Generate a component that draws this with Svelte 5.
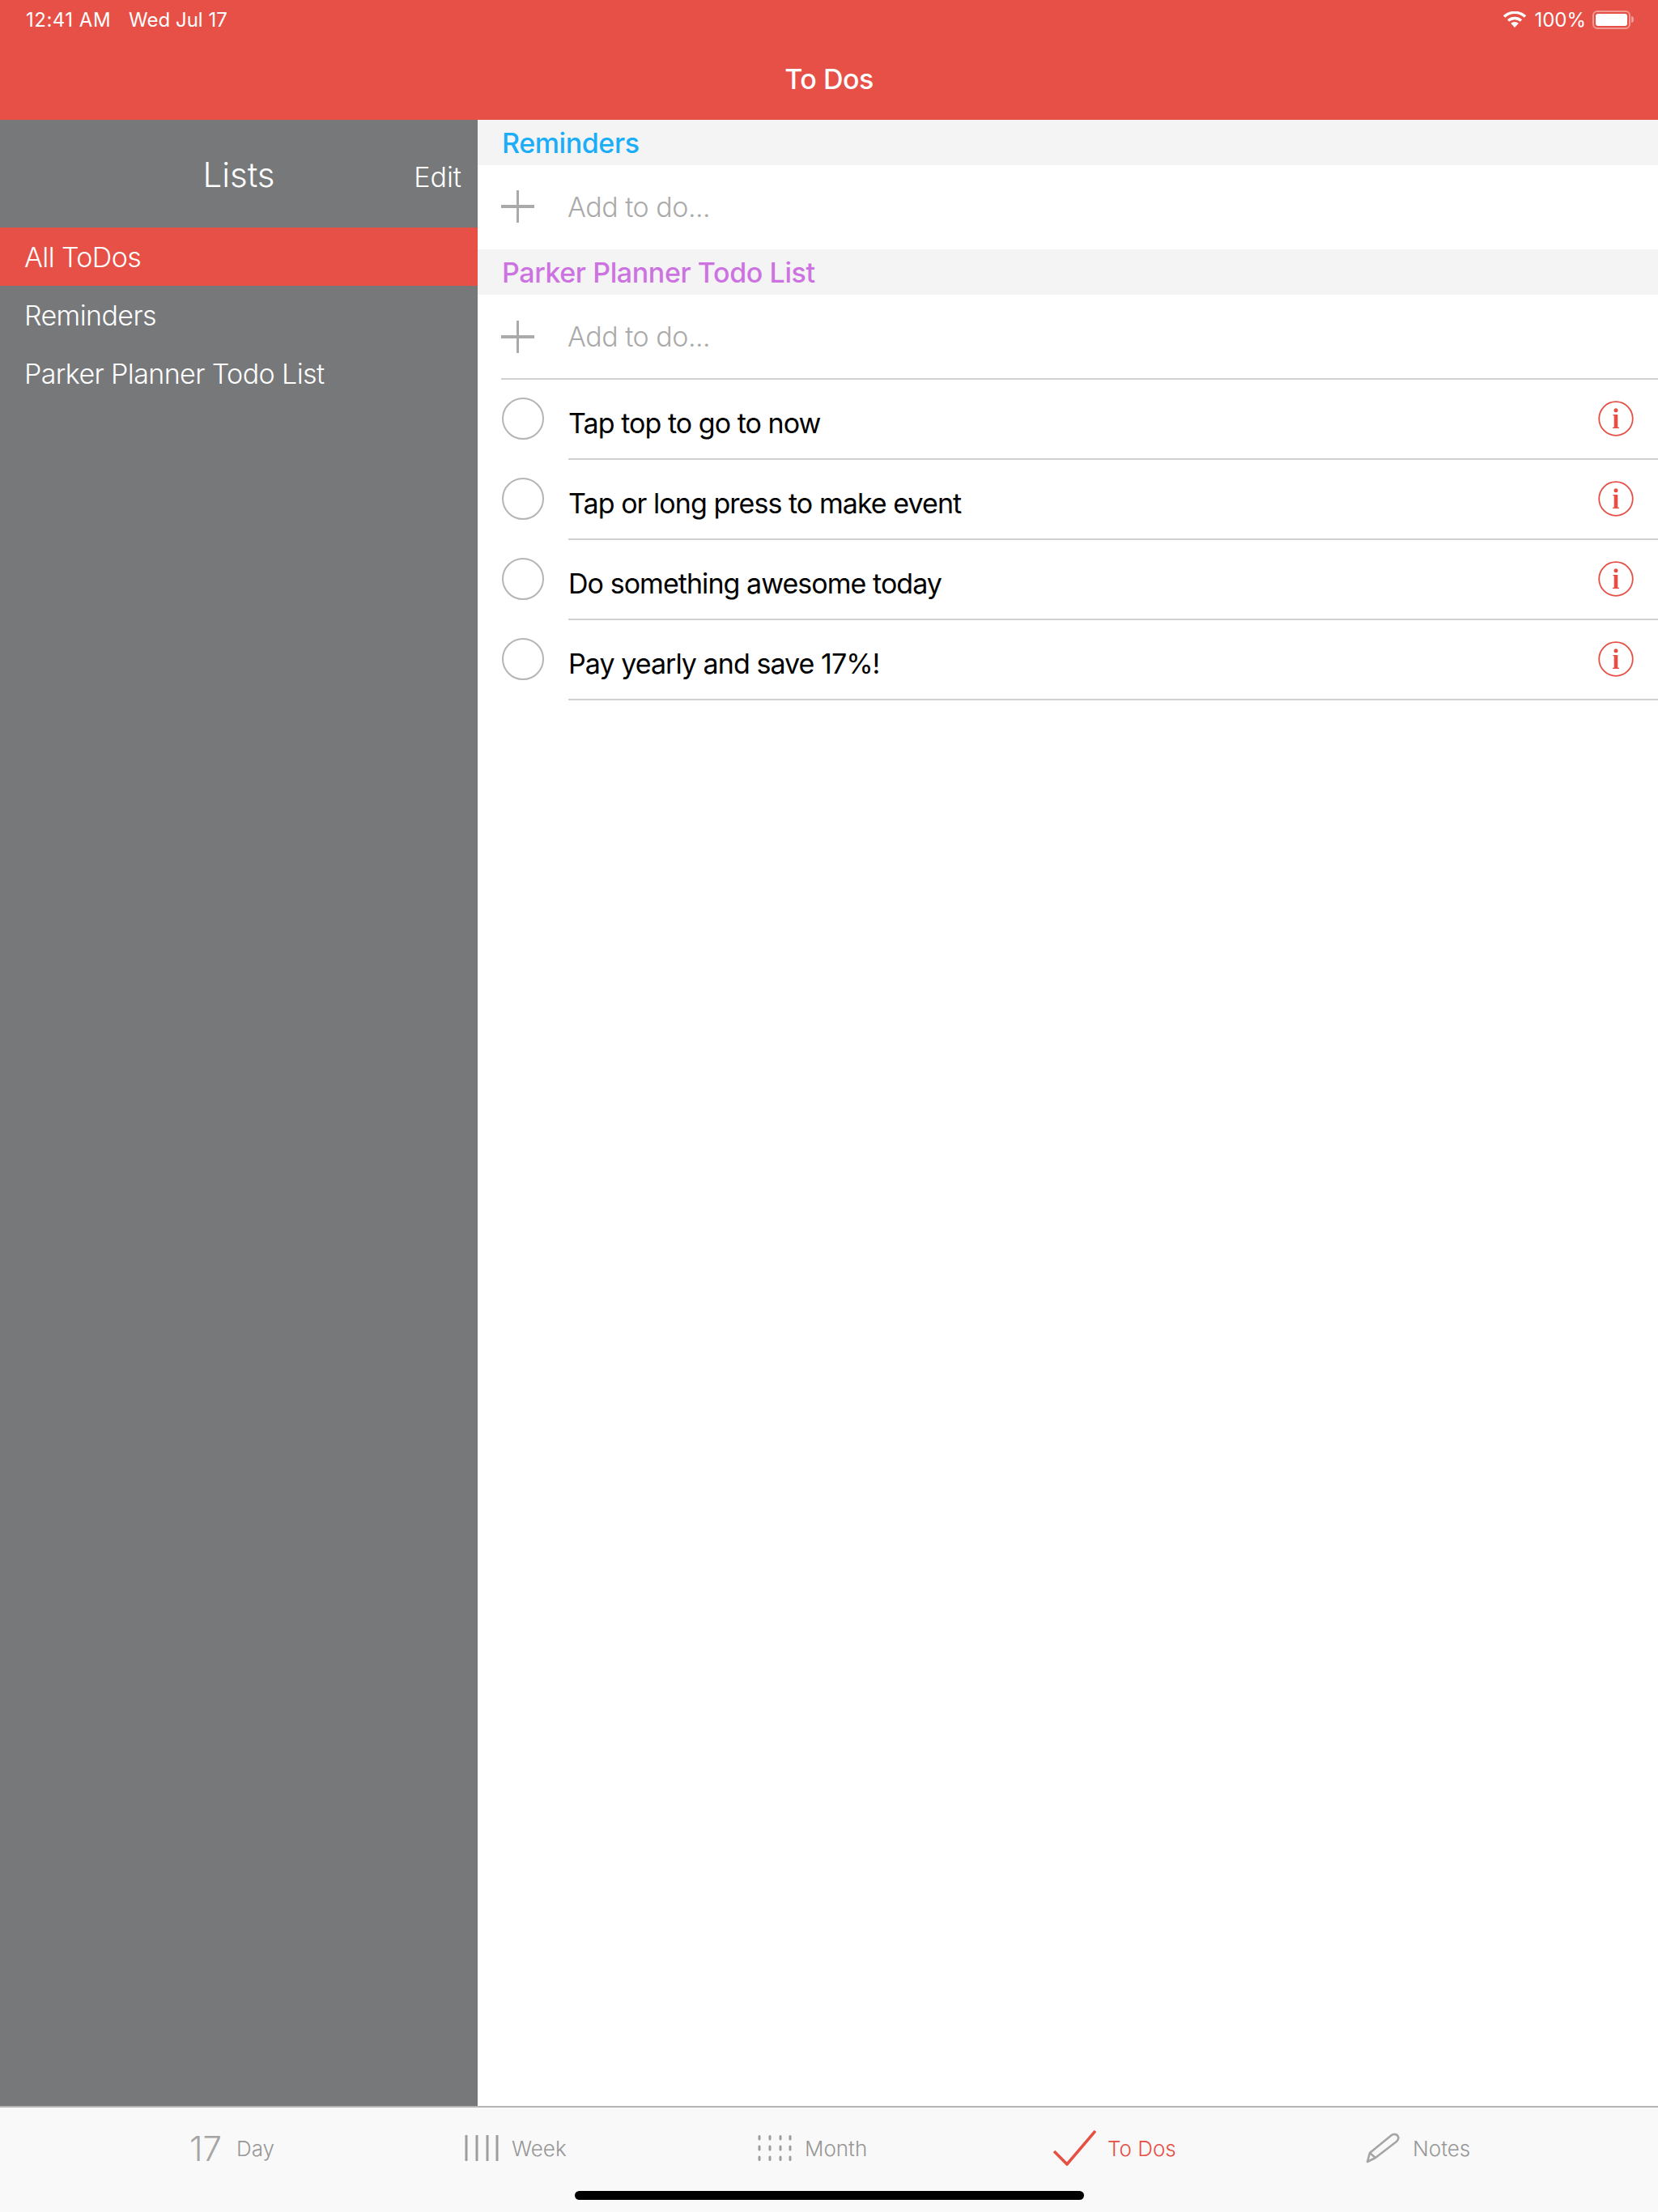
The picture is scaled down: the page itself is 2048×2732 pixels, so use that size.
<script>
    const lists = ["All ToDos", "Reminders", "Parker Planner Todo List"];
    const todos = [
        "Tap top to go to now",
        "Tap or long press to make event",
        "Do something awesome today",
        "Pay yearly and save 17%!",
    ];
</script>

<div class="page">
    <header>
        <div class="status">
            <div class="time"><span class="clock">12:41 AM</span><span>Wed Jul 17</span></div>
            <div class="indicators">
                <svg class="wifi" width="28" height="20" viewBox="0 0 28 20">
                    <path d="M1 6.5 A19 19 0 0 1 27 6.5" fill="none" stroke="#fff" stroke-width="3.4" />
                    <path d="M6 11.5 A12 12 0 0 1 22 11.5" fill="none" stroke="#fff" stroke-width="3.4" />
                    <path d="M14 20 L9.2 14.8 A7 7 0 0 1 18.8 14.8 Z" fill="#fff" />
                </svg>
                <span>100%</span>
                <div class="battery"><div class="charge"></div></div>
                <div class="nub"></div>
            </div>
        </div>
        <div class="title">To Dos</div>
    </header>

    <div class="middle">
        <aside>
            <div class="aside-head">
                <span class="lists">Lists</span>
                <span class="edit">Edit</span>
            </div>
            {#each lists as list, i}
                <div class="list-item" class:active={i === 0}>{list}</div>
            {/each}
        </aside>

        <main>
            <div class="section blue">Reminders</div>
            <div class="add first">
                <span class="plus"></span>
                <span>Add to do...</span>
            </div>
            <div class="section purple">Parker Planner Todo List</div>
            <div class="add">
                <span class="plus"></span>
                <span>Add to do...</span>
            </div>
            <div class="rule"></div>
            {#each todos as todo}
                <div class="todo">
                    <div class="circle"></div>
                    <div class="todo-body">
                        <span class="todo-text">{todo}</span>
                        <svg class="info" width="44" height="44" viewBox="0 0 44 44">
                            <circle cx="22" cy="22" r="20.8" fill="none" stroke="#e64f44" stroke-width="1.8" />
                            <circle cx="22" cy="11.7" r="2.5" fill="#e64f44" />
                            <path d="M18.4 17 H24.3 V32.8 H26 V34 H18 V32.8 H19.7 V18.2 H18.4 Z" fill="#e64f44" />
                        </svg>
                    </div>
                </div>
            {/each}
        </main>
    </div>

    <nav>
        <div class="tab day">
            <span class="day-num">17</span>
            <span>Day</span>
        </div>
        <div class="tab">
            <svg width="42" height="32" viewBox="0 0 42 32">
                <path d="M2 1 V31 M15 1 V31 M28 1 V31 M40 1 V31" stroke="#9d9d9d" stroke-width="3" stroke-linecap="round" />
            </svg>
            <span>Week</span>
        </div>
        <div class="tab">
            <svg width="42" height="32" viewBox="0 0 42 32">
                <path d="M2 1.5 V5 M15 1.5 V5 M28 1.5 V5 M40 1.5 V5 M2 14 V18 M15 14 V18 M28 14 V18 M40 14 V18 M2 27 V30.5 M15 27 V30.5 M28 27 V30.5 M40 27 V30.5" stroke="#9d9d9d" stroke-width="3" stroke-linecap="round" />
            </svg>
            <span>Month</span>
        </div>
        <div class="tab current">
            <svg width="53" height="44" viewBox="0 0 53 44">
                <path d="M1 26 L17 42 L52 1" fill="none" stroke="#e64f44" stroke-width="3.6" />
            </svg>
            <span>To Dos</span>
        </div>
        <div class="tab notes">
            <svg width="42" height="38" viewBox="0 0 42 38">
                <path d="M2 36 L5 25 L32 3 C35 1 39 2 40 5 C41 7 40 9 38 11 L12 31 Z M5 25 L12 31" fill="none" stroke="#a5a5a5" stroke-width="2.6" stroke-linejoin="round" />
            </svg>
            <span>Notes</span>
        </div>
        <div class="home"></div>
    </nav>
</div>

<style>
    :global(body) {
        margin: 0;
    }

    .page {
        width: 2048px;
        height: 2732px;
        display: flex;
        flex-direction: column;
        font-family: Inter, "Liberation Sans", sans-serif;
        background: #fff;
    }

    header {
        height: 148px;
        flex: none;
        background: #e65046;
        color: #fff;
    }

    .status {
        display: flex;
        justify-content: space-between;
        align-items: center;
        height: 48px;
        padding: 0 30px 0 32px;
        font-size: 24px;
    }

    .time {
        display: flex;
        gap: 22px;
    }

    .clock {
        letter-spacing: 0.5px;
    }

    .indicators {
        display: flex;
        align-items: center;
    }

    .wifi {
        margin-right: 10px;
    }

    .battery {
        width: 47px;
        height: 23px;
        box-sizing: border-box;
        margin-left: 8px;
        padding: 2px;
        border: 2px solid #f29a94;
        border-radius: 6px;
    }

    .charge {
        height: 100%;
        background: #fff;
        border-radius: 3px;
    }

    .nub {
        width: 3px;
        height: 8px;
        margin-left: 1px;
        background: #f29a94;
        border-radius: 0 3px 3px 0;
    }

    .title {
        margin-top: 29px;
        text-align: center;
        font-size: 34px;
        font-weight: 500;
        line-height: 42px;
        letter-spacing: -0.5px;
    }

    .middle {
        flex: 1;
        display: flex;
        min-height: 0;
    }

    aside {
        width: 590px;
        flex: none;
        background: #77787a;
        color: #fff;
    }

    .aside-head {
        height: 133px;
        display: flex;
        align-items: center;
        justify-content: flex-end;
        position: relative;
        padding-right: 20px;
        box-sizing: border-box;
    }

    .lists {
        position: absolute;
        left: 0;
        right: 0;
        top: 43px;
        text-align: center;
        font-size: 42px;
        font-weight: 300;
        line-height: 50px;
    }

    .edit {
        font-size: 34px;
        font-weight: 300;
        margin-top: 8px;
    }

    .list-item {
        height: 72px;
        padding-left: 30px;
        display: flex;
        align-items: center;
        font-size: 34px;
        font-weight: 300;
        letter-spacing: -0.6px;
    }

    .list-item.active {
        background: #e65046;
    }

    main {
        flex: 1;
    }

    .section {
        height: 56px;
        padding-left: 30px;
        display: flex;
        align-items: center;
        background: #f4f4f4;
        font-size: 34px;
        font-weight: 500;
        letter-spacing: -0.4px;
    }

    .blue {
        color: #1badf8;
    }

    .purple {
        color: #cc73e1;
    }

    .add {
        height: 103px;
        padding-left: 29px;
        display: flex;
        align-items: center;
        gap: 41px;
        color: #aaa;
        font-size: 34px;
        font-weight: 300;
        letter-spacing: -0.5px;
    }

    .add.first {
        height: 102px;
        padding-bottom: 2px;
    }

    .plus {
        width: 41px;
        height: 40px;
        background:
            linear-gradient(#aaa, #aaa) center / 3px 100% no-repeat,
            linear-gradient(#aaa, #aaa) center / 100% 4px no-repeat;
    }

    .rule {
        height: 2px;
        margin-left: 29px;
        background: #d0d0d0;
    }

    .todo {
        height: 99px;
        display: flex;
        padding: 0 0 0 30px;
    }

    .circle {
        width: 52px;
        height: 52px;
        box-sizing: border-box;
        margin-top: 22px;
        border: 2px solid #b5b5b5;
        border-radius: 50%;
        flex: none;
    }

    .todo-body {
        flex: 1;
        margin-left: 30px;
        padding-right: 30px;
        display: flex;
        align-items: center;
        justify-content: space-between;
        border-bottom: 2px solid #d0d0d0;
    }

    .todo-text {
        margin-top: 10px;
        font-size: 34px;
        font-weight: 400;
        letter-spacing: -0.95px;
        color: #000;
    }

    .info {
        margin-top: -1px;
    }

    nav {
        height: 131px;
        flex: none;
        box-sizing: border-box;
        position: relative;
        display: grid;
        grid-template-columns: 340px 362px 365px 386px auto;
        padding: 28px 0 0 234px;
        border-top: 2px solid #b4b4b4;
        background: #f9f9f9;
        color: #979797;
        font-size: 26px;
        font-weight: 300;
    }

    .tab {
        display: flex;
        align-items: center;
        gap: 16px;
        height: 44px;
    }

    .day {
        gap: 18px;
    }

    .day-num {
        font-size: 42px;
        font-weight: 300;
        color: #a5a5a5;
    }

    .current {
        gap: 14px;
        color: #e64f44;
    }

    .notes {
        gap: 16px;
    }

    .home {
        position: absolute;
        left: 710px;
        top: 103px;
        width: 629px;
        height: 11px;
        background: #000;
        border-radius: 6px;
    }
</style>
